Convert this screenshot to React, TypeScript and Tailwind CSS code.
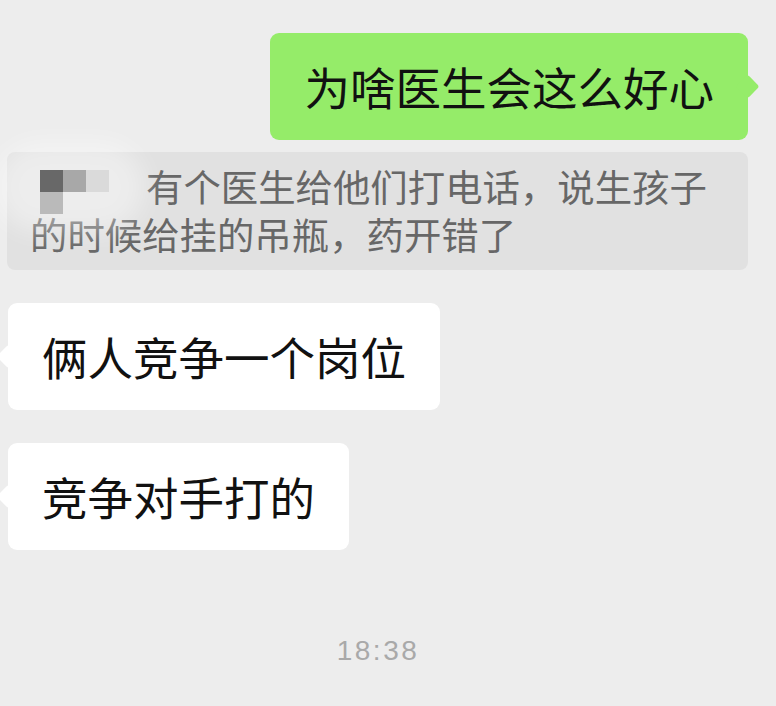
import React from "react";

const cjk = { fontFamily: '"Noto Sans CJK SC", "Noto Sans", sans-serif' };

function Mosaic() {
    return (
        <div className="absolute left-[33px] top-[18px] grid grid-cols-3 grid-rows-2">
            <div className="h-[22px] w-[23px] bg-[#686868]" />
            <div className="h-[22px] w-[23px] bg-[#a8a8a8]" />
            <div className="h-[22px] w-[23px] bg-[#dadada]" />
            <div className="h-[22px] w-[23px] bg-[#bababa]" />
        </div>
    );
}

export default function App() {
    return (
        <div className="min-h-[706px] w-[776px] bg-[#ededed] pt-[33px]" style={cjk}>
            <div className="flex justify-end pr-[28px]">
                <div className="relative flex h-[107px] items-center rounded-[9px] bg-[#95ec69] px-[34px] text-[45.5px] leading-none text-[#111]">
                    为啥医生会这么好心
                    <div className="absolute right-[-8px] top-[45px] h-[17px] w-[17px] rotate-45 rounded-[3px] bg-[#95ec69]" />
                </div>
            </div>

            <div className="relative ml-[7px] mr-[28px] mt-[12px] rounded-[8px] bg-[#e1e1e1] pb-[12px] pl-[23px] pt-[10px] text-[37.4px] leading-[48px] text-[#676767]">
                <span className="inline-block w-[116px]" />有个医生给他们打电话，说生孩子
                <br />
                的时候给挂的吊瓶，药开错了
                <div className="absolute left-[-12px] top-[-10px] h-[90px] w-[150px] rounded-full bg-white/40 blur-md" />
                <Mosaic />
            </div>

            <div className="ml-[8px] mt-[33px] flex flex-col items-start gap-[33px]">
                <div className="relative flex h-[107px] items-center rounded-[9px] bg-white pl-[34px] pr-[34px] text-[45.5px] leading-none text-[#111]">
                    俩人竞争一个岗位
                    <div className="absolute left-[-8px] top-[45px] h-[17px] w-[17px] rotate-45 rounded-[3px] bg-white" />
                </div>
                <div className="relative flex h-[107px] items-center rounded-[9px] bg-white pl-[34px] pr-[34px] text-[45.5px] leading-none text-[#111]">
                    竞争对手打的
                    <div className="absolute left-[-8px] top-[45px] h-[17px] w-[17px] rotate-45 rounded-[3px] bg-white" />
                </div>
            </div>

            <div
                className="mt-[87px] pr-[20px] text-center text-[28px] leading-none tracking-[2.5px] text-[#a9a9a9]"
                style={{ fontFamily: '"Liberation Sans", Arial, sans-serif' }}
            >
                18:38
            </div>
        </div>
    );
}
